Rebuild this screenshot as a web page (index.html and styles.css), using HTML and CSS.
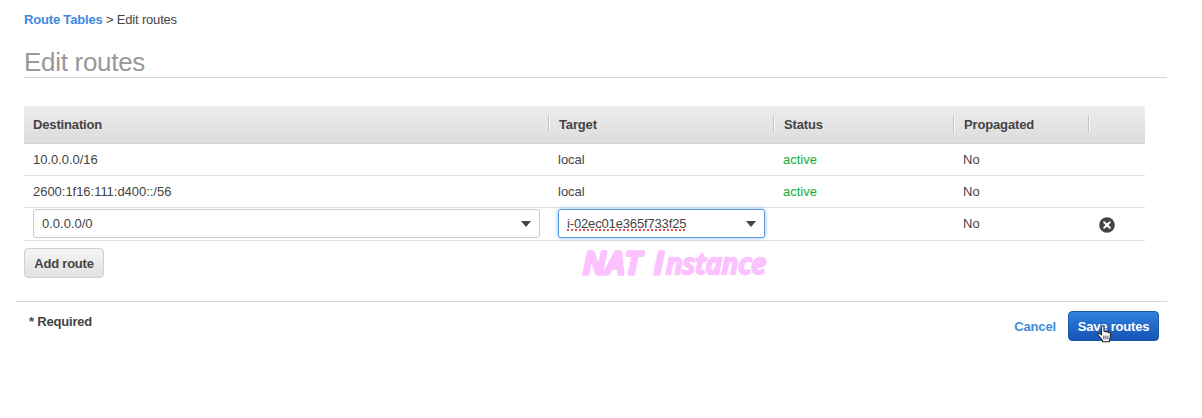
FILE: index.html
```html
<!DOCTYPE html>
<html lang="en">
<head>
<meta charset="utf-8">
<title>Edit routes</title>
<link rel="stylesheet" href="styles.css">
</head>
<body>
<nav class="breadcrumb"><a class="crumb-link">Route Tables</a> &gt; Edit routes</nav>
<h1 class="title">Edit routes</h1>
<main class="routes">
  <div class="row head">
    <div class="cell">Destination</div><div class="cell">Target</div><div class="cell">Status</div><div class="cell">Propagated</div><div class="cell"></div>
  </div>
  <div class="row">
    <div class="cell cidr">10.0.0.0/16</div><div class="cell">local</div><div class="cell active">active</div><div class="cell">No</div><div class="cell"></div>
  </div>
  <div class="row">
    <div class="cell cidr">2600:1f16:111:d400::/56</div><div class="cell">local</div><div class="cell active">active</div><div class="cell">No</div><div class="cell"></div>
  </div>
  <div class="row">
    <div class="cell"><div class="combo">0.0.0.0/0<span class="arrow"></span></div></div>
    <div class="cell"><div class="combo focused"><span class="misspelt">i-02ec01e365f733f25</span><span class="arrow"></span></div></div>
    <div class="cell"></div><div class="cell">No</div>
    <div class="cell remove"><svg width="16" height="16" viewBox="0 0 16 16"><circle cx="8" cy="8" r="7.8" fill="#444"/><path d="M5.2 5.2l5.6 5.6M10.800 5.200l-5.600 5.600" stroke="#fff" stroke-width="2" stroke-linecap="round"/></svg></div>
  </div>
</main>
<div class="under">
  <button class="add">Add route</button>
  <svg class="note" width="200" height="40" viewBox="0 0 200 40">
    <text x="11" y="29" textLength="58" class="caps">NAT</text>
    <text x="82" y="29" class="caps">I</text>
    <text x="94" y="29" textLength="100" class="lower" lengthAdjust="spacingAndGlyphs">nstance</text>
  </svg>
</div>
<footer class="footer">
  <div class="required">* Required</div>
  <div class="actions"><a class="cancel">Cancel</a><button class="save">Save routes
    <svg class="pointer" width="15" height="18" viewBox="0 0 14 17"><path d="M4.200 9.200V2.100c0-1.800 2.300-1.800 2.300 0v4.200c.4-.8 2-.7 2.100.3.500-.7 1.900-.5 2 .5.600-.6 1.900-.2 1.900.9v3.200c0 1.500-.7 2.200-.9 3.200v1.500H5.200v-1.200C4.300 13.300 2.400 11.400 1 9.400c-.8-1.300.7-2 1.700-1.100z" fill="#fff" stroke="#222" stroke-width="1"/><path d="M6.400 10v3.500M8.300 10v3.500M10.200 10v3.500" stroke="#222" stroke-width=".8"/></svg>
  </button></div>
</footer>
</body>
</html>
```
FILE: styles.css
```css
* { box-sizing: border-box; }
body { margin: 0; padding: 12px 35px 0 24px; background: #fff; color: #444; font: 13px/16px "Liberation Sans", Arial, sans-serif; }
.breadcrumb { height: 16px; letter-spacing: -.18px; }
.crumb-link, .cancel { color: #3e8ade; font-weight: bold; }
.title { height: 50px; margin: 0; padding-top: 19px; border-bottom: 1px solid #d5d5d5; color: #999; font-size: 26px; line-height: 30px; font-weight: normal; letter-spacing: -.3px; }
.routes { width: 1121px; margin-top: 28px; }
.row { display: grid; grid-template-columns: 525px 225px 180px 135px 56px; height: 32px; border-bottom: 1px solid #dfdfdf; }
.row:last-child { height: 33px; }
.cell { display: flex; align-items: center; padding: 0 9px; }
.cidr { letter-spacing: -.03px; }
.head { height: 38px; border-bottom: 1px solid #d2d2d2; background: linear-gradient(#ededed, #dcdcdc); font-weight: bold; letter-spacing: -.15px; }
.head .cell + .cell { margin: 9px 0 10px -1px; padding: 1px 0 0 10px; border-left: 1px solid #c7c7c7; box-shadow: inset 1px 0 #f5f5f5; }
.active { color: #16ab3c; }
.combo { display: flex; align-items: center; justify-content: space-between; width: 100%; height: 29px; margin-bottom: 1px; padding: 0 8px; border: 1px solid #ccc; border-radius: 3px; background: #fff; }
.combo.focused { border-color: #5a99df; box-shadow: 0 0 4px #8abaf0; }
.misspelt { letter-spacing: -.15px; text-decoration: underline dotted #e65353 2px; text-underline-offset: 2px; text-decoration-skip-ink: none; }
.arrow { border: 5.5px solid transparent; border-top: 6px solid #444; border-bottom: 0; }
.remove { padding: 2px 0 0 10px; }
.under { display: flex; height: 60px; padding-top: 7px; }
button { font: bold 13px/16px "Liberation Sans", Arial, sans-serif; }
.add { width: 80px; height: 30px; padding: 1px 0 0; border: 1px solid #d0d0d0; border-radius: 4px; background: linear-gradient(#f4f4f4, #e2e2e2); color: #444; letter-spacing: -.22px; }
.note { margin: -3px 0 0 468px; overflow: visible; fill: #fcc2ff; stroke: #fcc2ff; stroke-width: 3.6px; stroke-linejoin: round; stroke-linecap: round; font: italic 600 29px "Open Sans", sans-serif; }
.caps { font-family: "Open Sans", sans-serif; font-size: 31px; font-weight: 600; }
.lower { font-size: 28px; stroke-width: 2.4px; }
.footer { display: flex; justify-content: space-between; width: 1152px; height: 60px; margin-left: -9px; padding: 9px 8px 0 14px; border-top: 1px solid #d9d9d9; }
.required { padding-top: 3px; font-weight: bold; letter-spacing: -.2px; }
.actions { display: flex; gap: 12px; }
.cancel { padding-top: 8px; letter-spacing: -.15px; }
.save { position: relative; width: 91px; height: 30px; padding: 1px 0 0; border: 1px solid #1d5bab; border-radius: 4px; background: linear-gradient(#2f81de, #1554b4); color: #fff; white-space: nowrap; letter-spacing: -.2px; }
.pointer { position: absolute; left: 28px; top: 13px; }
```
